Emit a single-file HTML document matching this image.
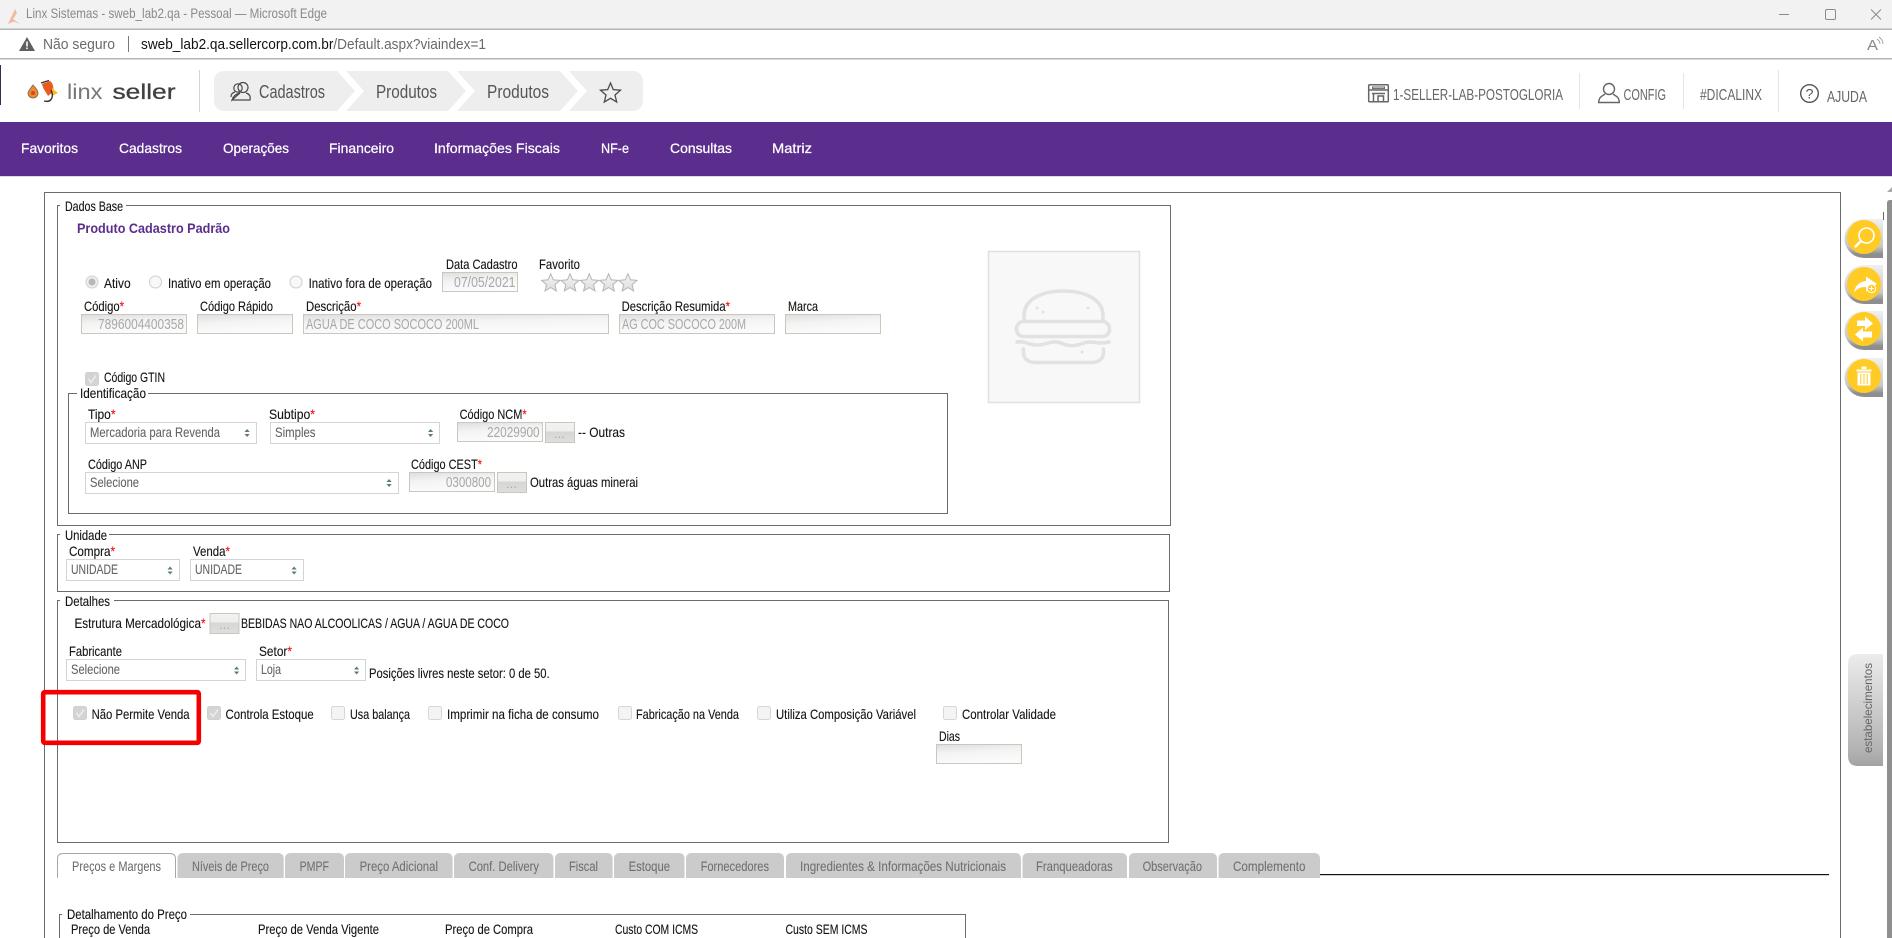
<!DOCTYPE html>
<html lang="pt-BR">
<head>
<meta charset="utf-8">
<title>Linx Sistemas - sweb_lab2.qa</title>
<style>
html,body{margin:0;padding:0;background:#fff;width:1892px;height:938px;overflow:hidden}
svg{display:block;position:absolute;left:0;top:0}
text{font-family:"Liberation Sans Narrow","Liberation Sans",sans-serif;font-size:13px;white-space:pre}
.l{fill:#141414;font-size:14px;stroke:#141414;stroke-width:.12}
.v{fill:#a8a8a8;font-size:14.5px}
.s{fill:#636363;font-size:14px;stroke:#636363;stroke-width:.08}
.r{fill:#f01010;stroke:#f01010}
.f{fill:none;stroke:#686c72;stroke-width:1}
.h{fill:#666;font-size:16px}
.b{fill:#555;font-size:18px}
.n{fill:#fff;font-size:14px;font-family:"Liberation Sans",sans-serif;stroke:#fff;stroke-width:.25}
.t{fill:#707070;font-size:14px;stroke:#707070;stroke-width:.08}
.i{fill:url(#ig);stroke:#c9c9bb;stroke-width:1}
.sel{fill:#fff;stroke:#d4d4d4;stroke-width:1}
.ck{fill:#f4f4f4;stroke:#d6d6d6;stroke-width:1}
.ckd{fill:#d4d4d4;stroke:#d0d0d0;stroke-width:1}
.tab{fill:#cbcbcb}
.w{fill:#fff}
</style>
</head>
<body>
<svg width="1892" height="938" viewBox="0 0 1892 938" xmlns="http://www.w3.org/2000/svg">
<defs>
<linearGradient id="ig" x1="0" y1="0" x2=".28" y2="1"><stop offset="0" stop-color="#dedede"/><stop offset=".45" stop-color="#f3f3f3"/><stop offset="1" stop-color="#fbfbfb"/></linearGradient>
<linearGradient id="bg" x1="0" y1="0" x2="0" y2="1"><stop offset="0" stop-color="#f2f2f2"/><stop offset=".45" stop-color="#efefef"/><stop offset=".46" stop-color="#d6d6d6"/><stop offset="1" stop-color="#dedede"/></linearGradient>
<linearGradient id="pill" x1="0" y1="0" x2="0" y2="1"><stop offset="0" stop-color="#f0f0f0"/><stop offset=".7" stop-color="#c8c8c8"/><stop offset=".9" stop-color="#8e8e8e"/><stop offset="1" stop-color="#8e8e8e"/></linearGradient>
<linearGradient id="est" x1="0" y1="0" x2="0" y2="1"><stop offset="0" stop-color="#ececec"/><stop offset=".85" stop-color="#b4b4b4"/><stop offset="1" stop-color="#a2a2a2"/></linearGradient>
<linearGradient id="st" x1="0" y1="0" x2="0" y2="1"><stop offset="0" stop-color="#f6f6f6"/><stop offset="1" stop-color="#dcdcdc"/></linearGradient>
<g id="arr"><path d="M0 -1 L2.6 -4 L5.2 -1Z M0 1 L2.6 4 L5.2 1Z" fill="#5c7c78"/></g>
<path id="star" d="M9.7 0.8 L12.3 6.8 L18.8 7.4 L13.9 11.6 L15.4 18 L9.7 14.6 L4 18 L5.5 11.6 L0.6 7.4 L7.1 6.8Z" fill="url(#st)" stroke="#b5b5b5" stroke-width="1"/>
</defs>

<!-- Title bar -->
<rect width="1892" height="29" fill="#f2f2f2"/>
<rect y="28.5" width="1892" height="1.5" fill="#b4b4b4"/>
<path d="M8 24 L15 9 L17 13 L13 19 L20 24 L14 21.5Z" fill="#f3b9a3"/>
<text x="26" y="18" textLength="301" lengthAdjust="spacingAndGlyphs" fill="#8a8a8a" style="font-size:14px">Linx Sistemas - sweb_lab2.qa - Pessoal — Microsoft Edge</text>
<path d="M1779 14.5H1789" stroke="#8a8a8a" stroke-width="1"/>
<rect x="1825.5" y="9.5" width="10" height="10" rx="1.5" fill="none" stroke="#8a8a8a"/>
<path d="M1871 9.5L1881 19.5M1881 9.5L1871 19.5" stroke="#8a8a8a" stroke-width="1"/>

<!-- Address bar -->
<rect y="30" width="1892" height="28" fill="#fff"/>
<rect y="58" width="1892" height="1.5" fill="#b4b4b4"/>
<path d="M27 37 L35 51 H19Z" fill="#5f5f5f"/>
<rect x="26.2" y="41.5" width="1.6" height="5" fill="#fff"/><rect x="26.2" y="47.5" width="1.6" height="1.6" fill="#fff"/>
<text x="43" y="49" textLength="72" lengthAdjust="spacingAndGlyphs" fill="#6a6a6a" style="font-size:15px">Não seguro</text>
<rect x="128" y="36" width="1" height="16" fill="#7a7a7a"/>
<text x="141" y="49" textLength="345" lengthAdjust="spacingAndGlyphs" fill="#6a6a6a" style="font-size:15px"><tspan fill="#111">sweb_lab2.qa.sellercorp.com.br</tspan>/Default.aspx?viaindex=1</text>
<text x="1867" y="50" textLength="11" lengthAdjust="spacingAndGlyphs" fill="#8a8a8a" style="font-size:15px">A</text>
<path d="M1877 39q3 2 3 5M1879 37q4 3 4 7" fill="none" stroke="#999" stroke-width=".8"/>

<!-- App header -->
<rect x="0" y="65" width="1" height="40" fill="#3a2a55"/>
<path d="M33 85 C30 89 28 91 28 93 A5 5 0 0 0 38 93 C38 91 36 88 33 85Z" fill="#f08a2a" stroke="#666" stroke-width=".8"/>
<circle cx="33" cy="93" r="2" fill="#d9471a"/>
<path d="M42 84 L50 81 C53 83 54 88 53 92 L48 96 C46 92 43 89 42 84Z" fill="#ea5a20"/>
<path d="M52 88 L58 93 L52 96Z" fill="#fcbb25"/>
<path d="M41 83 L49 80.5 M51 90 C54 96 52 103 44 101" fill="none" stroke="#333" stroke-width="1.4"/>
<text x="67" y="99" textLength="35.5" lengthAdjust="spacingAndGlyphs" fill="#777" style="font-size:21px">linx</text>
<text x="112.5" y="99" textLength="63" lengthAdjust="spacingAndGlyphs" fill="#404040" stroke="#404040" stroke-width=".3" style="font-size:21px">seller</text>
<rect x="199" y="70" width="1" height="42" fill="#d4d4d4"/>

<rect x="214" y="71" width="429" height="40" rx="10" fill="#eeeeee"/>
<path d="M337 71H346L364 91L346 111H337L355 91Z M448 71H457L475 91L457 111H448L466 91Z M560 71H569L587 91L569 111H560L578 91Z" fill="#fff"/>
<g fill="none" stroke="#4a4a4a" stroke-width="1.2">
<circle cx="243" cy="87.5" r="5"/>
<path d="M232 100 H250 C251 95 248 93.5 246 93 M240 93 C236 94 233 96 232 100Z"/>
<circle cx="238" cy="88" r="4.2"/>
<path d="M231 97 C231 94 233 92.5 235 92"/>
<path d="M610.5 83 L613.3 89.6 L620.5 90.2 L615 95 L616.7 102 L610.5 98.3 L604.3 102 L606 95 L600.5 90.2 L607.7 89.6Z" stroke-width="1.3"/>
</g>
<text class="b" x="259" y="98" textLength="66" lengthAdjust="spacingAndGlyphs">Cadastros</text>
<text class="b" x="376" y="98" textLength="61" lengthAdjust="spacingAndGlyphs">Produtos</text>
<text class="b" x="487" y="98" textLength="62" lengthAdjust="spacingAndGlyphs">Produtos</text>

<g fill="none" stroke="#666" stroke-width="1.5">
<rect x="1368.7" y="84.7" width="19.6" height="17" rx="1"/>
<path d="M1369 90H1388M1372 93.5H1385"/>
<rect x="1372.5" y="87" width="12" height="1.6" stroke-width="1"/>
<path d="M1373.5 102V94M1383.5 102V96H1378V102"/>
</g>
<text class="h" x="1393" y="100" textLength="170" lengthAdjust="spacingAndGlyphs">1-SELLER-LAB-POSTOGLORIA</text>
<rect x="1579" y="73" width="1" height="36" fill="#e4e4e4"/>
<g fill="none" stroke="#666" stroke-width="1.4">
<circle cx="1609" cy="89" r="5.5"/>
<path d="M1605 94 C1603 96 1599 96 1598.7 102.5 H1619.3 C1619 96 1615 96 1613 94"/>
</g>
<text class="h" x="1623.5" y="100" textLength="42.5" lengthAdjust="spacingAndGlyphs">CONFIG</text>
<rect x="1683" y="73" width="1" height="36" fill="#e4e4e4"/>
<text class="h" x="1700" y="100" textLength="62" lengthAdjust="spacingAndGlyphs">#DICALINX</text>
<rect x="1778" y="70" width="1" height="42" fill="#e4e4e4"/>
<circle cx="1809.5" cy="93.5" r="8.8" fill="none" stroke="#555" stroke-width="1.4"/>
<text x="1805.5" y="98.5" textLength="8" lengthAdjust="spacingAndGlyphs" fill="#555" style="font-size:14px">?</text>
<text class="h" x="1827" y="102" textLength="40" lengthAdjust="spacingAndGlyphs">AJUDA</text>

<!-- Nav -->
<rect y="122" width="1892" height="54" fill="#5b2d8c"/>
<rect y="176" width="1892" height="1" fill="#dcdcdc"/>
<text class="n" x="21" y="153" textLength="57" lengthAdjust="spacingAndGlyphs">Favoritos</text>
<text class="n" x="119" y="153" textLength="63" lengthAdjust="spacingAndGlyphs">Cadastros</text>
<text class="n" x="223" y="153" textLength="66" lengthAdjust="spacingAndGlyphs">Operações</text>
<text class="n" x="329" y="153" textLength="65" lengthAdjust="spacingAndGlyphs">Financeiro</text>
<text class="n" x="434" y="153" textLength="126" lengthAdjust="spacingAndGlyphs">Informações Fiscais</text>
<text class="n" x="601" y="153" textLength="28" lengthAdjust="spacingAndGlyphs">NF-e</text>
<text class="n" x="670" y="153" textLength="62" lengthAdjust="spacingAndGlyphs">Consultas</text>
<text class="n" x="772" y="153" textLength="40" lengthAdjust="spacingAndGlyphs">Matriz</text>

<!-- Outer box -->
<path class="f" d="M44.5 938V192.5H1840.5V938"/>

<!-- Dados Base -->
<rect class="f" x="57.5" y="205.5" width="1113" height="320"/>
<rect class="w" x="60" y="200" width="66" height="10"/>
<text class="l" x="65" y="211" textLength="58" lengthAdjust="spacingAndGlyphs">Dados Base</text>
<text x="77" y="233" textLength="153" lengthAdjust="spacingAndGlyphs" fill="#5b2d8c" style="font-weight:bold;font-size:14px">Produto Cadastro Padrão</text>

<circle cx="92" cy="282" r="6" fill="#eee" stroke="#d0d0d0"/><circle cx="92" cy="282" r="3.5" fill="#b8b8b8"/>
<circle cx="155.5" cy="282" r="6" fill="#f8f8f8" stroke="#d0d0d0"/>
<circle cx="296" cy="282" r="6" fill="#f8f8f8" stroke="#d0d0d0"/>
<text class="l" x="104" y="288" textLength="26.6" lengthAdjust="spacingAndGlyphs">Ativo</text>
<text class="l" x="168" y="288" textLength="103" lengthAdjust="spacingAndGlyphs">Inativo em operação</text>
<text class="l" x="308.6" y="288" textLength="123.4" lengthAdjust="spacingAndGlyphs">Inativo fora de operação</text>

<text class="l" x="446" y="269" textLength="71.5" lengthAdjust="spacingAndGlyphs">Data Cadastro</text>
<rect class="i" x="442.5" y="272.5" width="75" height="19"/>
<text class="v" x="454" y="287" textLength="61.5" lengthAdjust="spacingAndGlyphs">07/05/2021</text>
<text class="l" x="539" y="269" textLength="41" lengthAdjust="spacingAndGlyphs">Favorito</text>
<use href="#star" x="541" y="273"/><use href="#star" x="560.3" y="273"/><use href="#star" x="579.6" y="273"/><use href="#star" x="598.9" y="273"/><use href="#star" x="618.2" y="273"/>

<text class="l" x="84" y="311" textLength="40" lengthAdjust="spacingAndGlyphs">Código<tspan class="r">*</tspan></text>
<rect class="i" x="81.5" y="314.5" width="105" height="19"/>
<text class="v" x="98" y="329" textLength="86" lengthAdjust="spacingAndGlyphs">7896004400358</text>
<text class="l" x="200" y="311" textLength="73" lengthAdjust="spacingAndGlyphs">Código Rápido</text>
<rect class="i" x="197.5" y="314.5" width="95" height="19"/>
<text class="l" x="306" y="311" textLength="55" lengthAdjust="spacingAndGlyphs">Descrição<tspan class="r">*</tspan></text>
<rect class="i" x="303.5" y="314.5" width="305" height="19"/>
<text class="v" x="306" y="329" textLength="173" lengthAdjust="spacingAndGlyphs">AGUA DE COCO SOCOCO 200ML</text>
<text class="l" x="621.6" y="311" textLength="108.4" lengthAdjust="spacingAndGlyphs">Descrição Resumida<tspan class="r">*</tspan></text>
<rect class="i" x="619.5" y="314.5" width="155" height="19"/>
<text class="v" x="622" y="329" textLength="124" lengthAdjust="spacingAndGlyphs">AG COC SOCOCO 200M</text>
<text class="l" x="788" y="311" textLength="30" lengthAdjust="spacingAndGlyphs">Marca</text>
<rect class="i" x="785.5" y="314.5" width="95" height="19"/>

<!-- Image placeholder -->
<rect x="988.5" y="251.5" width="151" height="151" fill="#f8f8f8" stroke="#e0e0e0" stroke-width="1.5"/>
<g fill="none" stroke="#e2e2e2" stroke-width="3.6" stroke-linecap="round">
<path d="M1024 321 V316 C1024 298 1044 291 1063 291 C1083 291 1103 298 1103 316 V321"/>
<rect x="1016.5" y="321.5" width="93" height="15" rx="7"/>
<path d="M1017 342 C1024 340 1030 346 1039 345 C1048 344 1052 340 1061 343 C1070 347 1076 346 1084 343 C1092 340 1098 345 1109 342"/>
<path d="M1023.5 349 V352 C1023.5 359 1028 362.5 1036 362.5 H1091 C1099 362.5 1103.5 359 1103.5 352 V349"/>
</g>
<g fill="#e2e2e2"><circle cx="1037" cy="308" r="1.5"/><circle cx="1043" cy="312" r="1.5"/><circle cx="1088" cy="308" r="1.5"/><circle cx="1082" cy="352" r="1.5"/></g>

<!-- GTIN -->
<rect class="ckd" x="85.5" y="372.5" width="13" height="13" rx="2"/>
<path d="M88.5 379 L91 382.5 L96 375.5" fill="none" stroke="#ececec" stroke-width="1.6"/>
<text class="l" x="104" y="382" textLength="61" lengthAdjust="spacingAndGlyphs">Código GTIN</text>

<!-- Identificação -->
<rect class="f" x="68.5" y="393.5" width="879" height="120"/>
<rect class="w" x="77" y="388" width="71" height="10"/>
<text class="l" x="80" y="398" textLength="66" lengthAdjust="spacingAndGlyphs">Identificação</text>

<text class="l" x="88" y="419" textLength="27.5" lengthAdjust="spacingAndGlyphs">Tipo<tspan class="r">*</tspan></text>
<rect class="sel" x="85.5" y="422.5" width="171" height="21"/>
<text class="s" x="90" y="437" textLength="130" lengthAdjust="spacingAndGlyphs">Mercadoria para Revenda</text>
<use href="#arr" x="244.5" y="433"/>
<text class="l" x="269" y="419" textLength="46" lengthAdjust="spacingAndGlyphs">Subtipo<tspan class="r">*</tspan></text>
<rect class="sel" x="270.5" y="422.5" width="169" height="21"/>
<text class="s" x="275" y="437" textLength="40.5" lengthAdjust="spacingAndGlyphs">Simples</text>
<use href="#arr" x="428" y="433"/>
<text class="l" x="459.6" y="419" textLength="67" lengthAdjust="spacingAndGlyphs">Código NCM<tspan class="r">*</tspan></text>
<rect class="i" x="457.5" y="422.5" width="85" height="19"/>
<text class="v" x="487" y="437" textLength="52.6" lengthAdjust="spacingAndGlyphs">22029900</text>
<rect x="545.5" y="422.5" width="29" height="20" fill="url(#bg)" stroke="#c9c9bb"/>
<text x="554" y="438" textLength="11" lengthAdjust="spacingAndGlyphs" fill="#aaa">...</text>
<text class="l" x="578" y="437" textLength="47" lengthAdjust="spacingAndGlyphs">-- Outras</text>

<text class="l" x="88" y="469" textLength="59" lengthAdjust="spacingAndGlyphs">Código ANP</text>
<rect class="sel" x="85.5" y="472.5" width="313" height="21"/>
<text class="s" x="90" y="487" textLength="49" lengthAdjust="spacingAndGlyphs">Selecione</text>
<use href="#arr" x="386.5" y="483"/>
<text class="l" x="411" y="469" textLength="71" lengthAdjust="spacingAndGlyphs">Código CEST<tspan class="r">*</tspan></text>
<rect class="i" x="409.5" y="472.5" width="85" height="19"/>
<text class="v" x="446" y="487" textLength="45" lengthAdjust="spacingAndGlyphs">0300800</text>
<rect x="497.5" y="472.5" width="29" height="20" fill="url(#bg)" stroke="#c9c9bb"/>
<text x="506" y="488" textLength="11" lengthAdjust="spacingAndGlyphs" fill="#aaa">...</text>
<text class="l" x="530" y="487" textLength="108" lengthAdjust="spacingAndGlyphs">Outras águas minerai</text>

<!-- Unidade -->
<rect class="f" x="57.5" y="534.5" width="1112" height="57"/>
<rect class="w" x="60" y="529" width="49" height="10"/>
<text class="l" x="65" y="540" textLength="42" lengthAdjust="spacingAndGlyphs">Unidade</text>
<text class="l" x="69" y="556" textLength="46" lengthAdjust="spacingAndGlyphs">Compra<tspan class="r">*</tspan></text>
<text class="l" x="193" y="556" textLength="37" lengthAdjust="spacingAndGlyphs">Venda<tspan class="r">*</tspan></text>
<rect class="sel" x="66.5" y="559.5" width="113" height="21"/>
<text class="s" x="71" y="574" textLength="47" lengthAdjust="spacingAndGlyphs">UNIDADE</text>
<use href="#arr" x="167.5" y="570.5"/>
<rect class="sel" x="190.5" y="559.5" width="113" height="21"/>
<text class="s" x="195" y="574" textLength="47" lengthAdjust="spacingAndGlyphs">UNIDADE</text>
<use href="#arr" x="291.5" y="570.5"/>

<!-- Detalhes -->
<rect class="f" x="57.5" y="600.5" width="1111" height="242"/>
<rect class="w" x="60" y="595" width="54" height="10"/>
<text class="l" x="65" y="606" textLength="45" lengthAdjust="spacingAndGlyphs">Detalhes</text>
<text class="l" x="74.5" y="628" textLength="131" lengthAdjust="spacingAndGlyphs">Estrutura Mercadológica<tspan class="r">*</tspan></text>
<rect x="210" y="613.5" width="29" height="20" fill="url(#bg)" stroke="#c9c9bb"/>
<text x="219" y="629" textLength="11" lengthAdjust="spacingAndGlyphs" fill="#aaa">...</text>
<text class="l" x="241" y="628" textLength="268" lengthAdjust="spacingAndGlyphs">BEBIDAS NAO ALCOOLICAS / AGUA / AGUA DE COCO</text>

<text class="l" x="69" y="656" textLength="53" lengthAdjust="spacingAndGlyphs">Fabricante</text>
<text class="l" x="259" y="656" textLength="33" lengthAdjust="spacingAndGlyphs">Setor<tspan class="r">*</tspan></text>
<rect class="sel" x="66.5" y="659.5" width="179" height="21"/>
<text class="s" x="71" y="674" textLength="49" lengthAdjust="spacingAndGlyphs">Selecione</text>
<use href="#arr" x="234" y="670.5"/>
<rect class="sel" x="256.5" y="659.5" width="109" height="21"/>
<text class="s" x="261" y="674" textLength="20" lengthAdjust="spacingAndGlyphs">Loja</text>
<use href="#arr" x="354" y="670.5"/>
<text class="l" x="369" y="678" textLength="180.6" lengthAdjust="spacingAndGlyphs">Posições livres neste setor: 0 de 50.</text>

<!-- Checkboxes -->
<rect class="ckd" x="73.5" y="706.5" width="13" height="13" rx="2"/>
<path d="M76.5 713 L79 716.5 L84 709.5" fill="none" stroke="#ececec" stroke-width="1.6"/>
<text class="l" x="91.6" y="719" textLength="98" lengthAdjust="spacingAndGlyphs">Não Permite Venda</text>
<rect class="ckd" x="207.5" y="706.5" width="13" height="13" rx="2"/>
<path d="M210.5 713 L213 716.5 L218 709.5" fill="none" stroke="#ececec" stroke-width="1.6"/>
<text class="l" x="225.5" y="719" textLength="88.2" lengthAdjust="spacingAndGlyphs">Controla Estoque</text>
<rect class="ck" x="331.5" y="706.5" width="13" height="13" rx="2"/>
<text class="l" x="350" y="719" textLength="60" lengthAdjust="spacingAndGlyphs">Usa balança</text>
<rect class="ck" x="428.5" y="706.5" width="13" height="13" rx="2"/>
<text class="l" x="447" y="719" textLength="152" lengthAdjust="spacingAndGlyphs">Imprimir na ficha de consumo</text>
<rect class="ck" x="618.5" y="706.5" width="13" height="13" rx="2"/>
<text class="l" x="636" y="719" textLength="103" lengthAdjust="spacingAndGlyphs">Fabricação na Venda</text>
<rect class="ck" x="757.5" y="706.5" width="13" height="13" rx="2"/>
<text class="l" x="776" y="719" textLength="140" lengthAdjust="spacingAndGlyphs">Utiliza Composição Variável</text>
<rect class="ck" x="943.5" y="706.5" width="13" height="13" rx="2"/>
<text class="l" x="962" y="719" textLength="94" lengthAdjust="spacingAndGlyphs">Controlar Validade</text>
<text class="l" x="939" y="741" textLength="21" lengthAdjust="spacingAndGlyphs">Dias</text>
<rect class="i" x="936.5" y="744.5" width="85" height="19"/>

<!-- Red highlight -->
<rect x="43.2" y="692.2" width="155.6" height="50.6" rx="1.5" fill="none" stroke="#f40000" stroke-width="4.6"/>

<!-- Tabs -->
<rect x="1320" y="874" width="509" height="1.2" fill="#111"/>
<path d="M57.5 878 V859 Q57.5 853.5 63 853.5 H170 Q175.5 853.5 175.5 859 V878" fill="#fff" stroke="#a8a8a0"/>
<text x="72" y="871" textLength="89" lengthAdjust="spacingAndGlyphs" fill="#666" style="font-size:14px">Preços e Margens</text>
<g>
<path class="tab" d="M177.5 878V859Q177.5 853 183.5 853H277.7Q283.7 853 283.7 859V878Z"/>
<path class="tab" d="M285 878V859Q285 853 291 853H338Q344 853 344 859V878Z"/>
<path class="tab" d="M345 878V859Q345 853 351 853H446.6Q452.6 853 452.6 859V878Z"/>
<path class="tab" d="M454 878V859Q454 853 460 853H547.5Q553.5 853 553.5 859V878Z"/>
<path class="tab" d="M555 878V859Q555 853 561 853H606.6Q612.6 853 612.6 859V878Z"/>
<path class="tab" d="M614 878V859Q614 853 620 853H678.5Q684.5 853 684.5 859V878Z"/>
<path class="tab" d="M686 878V859Q686 853 692 853H778Q784 853 784 859V878Z"/>
<path class="tab" d="M786 878V859Q786 853 792 853H1015Q1021 853 1021 859V878Z"/>
<path class="tab" d="M1022.5 878V859Q1022.5 853 1028.5 853H1121Q1127 853 1127 859V878Z"/>
<path class="tab" d="M1129 878V859Q1129 853 1135 853H1211Q1217 853 1217 859V878Z"/>
<path class="tab" d="M1218.5 878V859Q1218.5 853 1224.5 853H1314Q1320 853 1320 859V878Z"/>
</g>
<text class="t" x="192" y="871" textLength="77" lengthAdjust="spacingAndGlyphs">Níveis de Preço</text>
<text class="t" x="299.6" y="871" textLength="29.4" lengthAdjust="spacingAndGlyphs">PMPF</text>
<text class="t" x="359.6" y="871" textLength="78.4" lengthAdjust="spacingAndGlyphs">Preço Adicional</text>
<text class="t" x="468.6" y="871" textLength="70.4" lengthAdjust="spacingAndGlyphs">Conf. Delivery</text>
<text class="t" x="569" y="871" textLength="29" lengthAdjust="spacingAndGlyphs">Fiscal</text>
<text class="t" x="628.6" y="871" textLength="41.4" lengthAdjust="spacingAndGlyphs">Estoque</text>
<text class="t" x="700.6" y="871" textLength="68.4" lengthAdjust="spacingAndGlyphs">Fornecedores</text>
<text class="t" x="800" y="871" textLength="206" lengthAdjust="spacingAndGlyphs">Ingredientes &amp; Informações Nutricionais</text>
<text class="t" x="1036" y="871" textLength="76.7" lengthAdjust="spacingAndGlyphs">Franqueadoras</text>
<text class="t" x="1142.6" y="871" textLength="59.4" lengthAdjust="spacingAndGlyphs">Observação</text>
<text class="t" x="1233" y="871" textLength="72.5" lengthAdjust="spacingAndGlyphs">Complemento</text>

<!-- Detalhamento -->
<path class="f" d="M59.5 938V914.5H965.5V938"/>
<rect class="w" x="62" y="909" width="128" height="10"/>
<text class="l" x="67" y="919" textLength="120" lengthAdjust="spacingAndGlyphs">Detalhamento do Preço</text>
<text class="l" x="71" y="934" textLength="79" lengthAdjust="spacingAndGlyphs">Preço de Venda</text>
<text class="l" x="258" y="934" textLength="121" lengthAdjust="spacingAndGlyphs">Preço de Venda Vigente</text>
<text class="l" x="445" y="934" textLength="88" lengthAdjust="spacingAndGlyphs">Preço de Compra</text>
<text class="l" x="615" y="934" textLength="83" lengthAdjust="spacingAndGlyphs">Custo COM ICMS</text>
<text class="l" x="785.5" y="934" textLength="82" lengthAdjust="spacingAndGlyphs">Custo SEM ICMS</text>

<!-- Right scrollbar -->
<path d="M1892 200 V938 H1887 V203 Q1887 200 1890 200Z" fill="#8f8f8f"/>
<path d="M1887 192 L1892 187 V192Z" fill="#aaa"/>
<rect x="1883" y="212" width="1" height="8" fill="#666"/>

<!-- Side buttons -->
<g>
<path d="M1883 219H1864A19.5 19.5 0 0 0 1864 258H1883Z" fill="url(#pill)"/>
<path d="M1883 265H1864A19.5 19.5 0 0 0 1864 304H1883Z" fill="url(#pill)"/>
<path d="M1883 311H1864A19.5 19.5 0 0 0 1864 350H1883Z" fill="url(#pill)"/>
<path d="M1883 358H1864A19.5 19.5 0 0 0 1864 397H1883Z" fill="url(#pill)"/>
<circle cx="1864" cy="237" r="17" fill="#ffcb24"/>
<circle cx="1864" cy="284" r="17" fill="#ffcb24"/>
<circle cx="1864" cy="329" r="17" fill="#ffcb24"/>
<circle cx="1864" cy="376" r="17" fill="#ffcb24"/>
</g>
<circle cx="1866.5" cy="235.5" r="7.5" fill="none" stroke="#fff" stroke-width="1.6"/>
<path d="M1861 241L1855.5 246.5" stroke="#fff" stroke-width="2.6" stroke-linecap="round"/>
<path d="M1854 292.5 C1855 285.5 1860 281.5 1866 281 V276.5 L1877 284 L1866 291.5 V287 C1861 287 1857 288.5 1854 292.5Z" fill="#fff"/>
<circle cx="1871.5" cy="288.5" r="4.2" fill="#ffcb24" stroke="#fff" stroke-width="1"/>
<path d="M1869 288.5H1874M1871.5 286V291" stroke="#fff" stroke-width="1"/>
<path d="M1857 320.5H1865V316.5L1873 323.5L1865 330V326H1857Z M1872 331.5H1863V327.5L1855 334.5L1863 341.5V337.5H1872Z" fill="#fff"/>
<path d="M1856.5 369.5H1871.5V371.5H1856.5Z M1861.5 366.5H1866.5V369H1861.5Z M1857.5 372.5H1870.5V385.5H1857.5Z" fill="#fff"/>
<path d="M1860.8 374V384M1864 374V384M1867.2 374V384" stroke="#ffcb24" stroke-width="1"/>

<!-- estabelecimentos tab -->
<path d="M1883 654H1858Q1848 654 1848 664V756Q1848 766 1858 766H1883Z" fill="url(#est)"/>
<text transform="translate(1872 753) rotate(-90)" textLength="90" lengthAdjust="spacingAndGlyphs" x="0" y="0" fill="#666" style="font-family:'Liberation Sans',sans-serif;font-size:12px">estabelecimentos</text>
</svg>
</body>
</html>
